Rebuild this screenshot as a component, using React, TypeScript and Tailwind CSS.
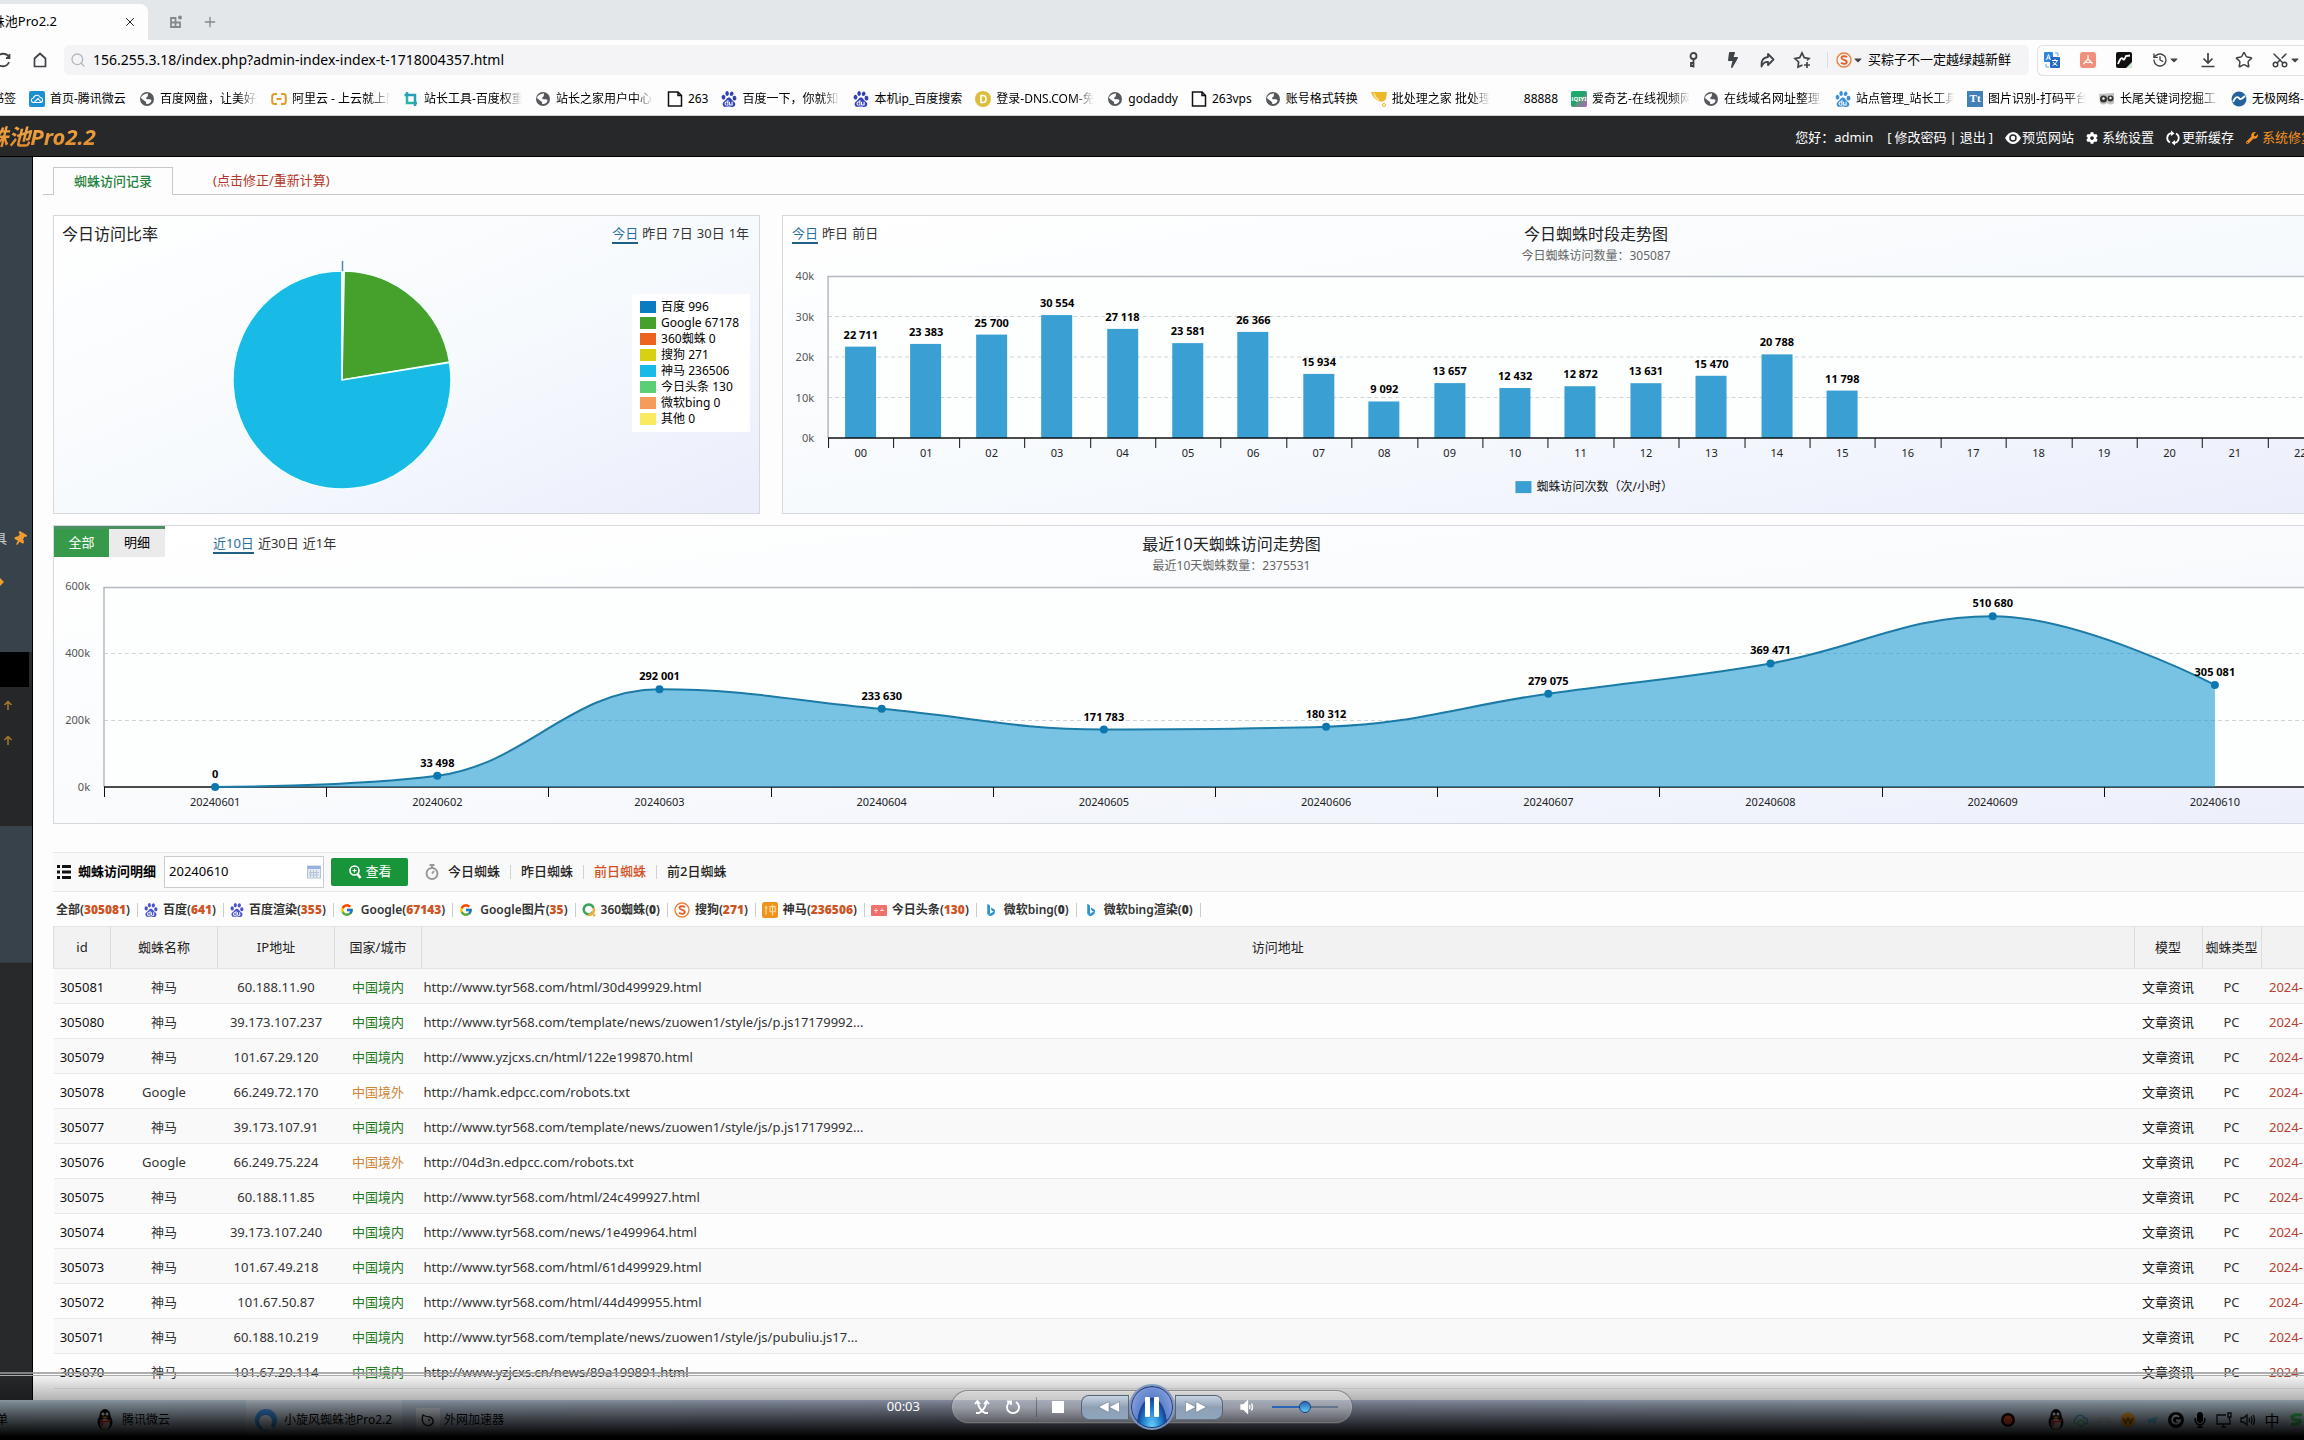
import type { ReactNode } from "react";
import { History, Plus, Scissors, Search, Star, X } from "lucide-react";
import { FaBolt, FaCaretDown, FaCog, FaMicrophone, FaThumbtack, FaWrench } from "react-icons/fa";
import { SiBaidu } from "react-icons/si";
import { FcGoogle } from "react-icons/fc";
import { BsBing } from "react-icons/bs";

/* ---------- data ---------- */

const hourly = [
  22711, 23383, 25700, 30554, 27118, 23581, 26366, 15934, 9092, 13657, 12432, 12872, 13631, 15470, 20788, 11798,
];

const daily = [
  { day: "20240601", value: 0 },
  { day: "20240602", value: 33498 },
  { day: "20240603", value: 292001 },
  { day: "20240604", value: 233630 },
  { day: "20240605", value: 171783 },
  { day: "20240606", value: 180312 },
  { day: "20240607", value: 279075 },
  { day: "20240608", value: 369471 },
  { day: "20240609", value: 510680 },
  { day: "20240610", value: 305081 },
];

const shares = [
  { name: "百度", value: 996, color: "#0a7cc0" },
  { name: "Google", value: 67178, color: "#45a02c" },
  { name: "360蜘蛛", value: 0, color: "#ec6420" },
  { name: "搜狗", value: 271, color: "#d8d012" },
  { name: "神马", value: 236506, color: "#17bbe6" },
  { name: "今日头条", value: 130, color: "#5bcf76" },
  { name: "微软bing", value: 0, color: "#f59c5a" },
  { name: "其他", value: 0, color: "#faea60" },
];

const visits = [
  ["305081", "神马", "60.188.11.90", "中国境内", "http://www.tyr568.com/html/30d499929.html"],
  ["305080", "神马", "39.173.107.237", "中国境内", "http://www.tyr568.com/template/news/zuowen1/style/js/p.js17179992..."],
  ["305079", "神马", "101.67.29.120", "中国境内", "http://www.yzjcxs.cn/html/122e199870.html"],
  ["305078", "Google", "66.249.72.170", "中国境外", "http://hamk.edpcc.com/robots.txt"],
  ["305077", "神马", "39.173.107.91", "中国境内", "http://www.tyr568.com/template/news/zuowen1/style/js/p.js17179992..."],
  ["305076", "Google", "66.249.75.224", "中国境外", "http://04d3n.edpcc.com/robots.txt"],
  ["305075", "神马", "60.188.11.85", "中国境内", "http://www.tyr568.com/html/24c499927.html"],
  ["305074", "神马", "39.173.107.240", "中国境内", "http://www.tyr568.com/news/1e499964.html"],
  ["305073", "神马", "101.67.49.218", "中国境内", "http://www.tyr568.com/html/61d499929.html"],
  ["305072", "神马", "101.67.50.87", "中国境内", "http://www.tyr568.com/html/44d499955.html"],
  ["305071", "神马", "60.188.10.219", "中国境内", "http://www.tyr568.com/template/news/zuowen1/style/js/pubuliu.js17..."],
  ["305070", "神马", "101.67.29.114", "中国境内", "http://www.yzjcxs.cn/news/89a199891.html"],
];

const spaced = (n: number) => String(n).replace(/\B(?=(\d{3})+$)/g, " ");

/* ---------- small icons ---------- */

function Globe() {
  return (
    <svg viewBox="0 0 16 16" className="size-4">
      <circle cx="8" cy="8" r="7" fill="#55585c" />
      <path d="M2 6.500C4 2.500 7 3 9 2.200C8.500 4 9.500 5 8 6C6.500 7 7 8 8.500 8.300C10.500 8.500 12 8 12.500 9.500C12 12 9.500 13.500 7 12.800C8 11 5.500 10 4.500 9C3.500 8.300 2.500 8 2 6.500Z" fill="#fff" />
    </svg>
  );
}

function Page() {
  return (
    <svg viewBox="0 0 16 16" className="size-4" fill="none" stroke="#111" strokeWidth="1.500">
      <path d="M1.500 1H11L14.500 4.500V15H1.500Z" />
      <path d="M11 1V4.500H14.500" />
    </svg>
  );
}

function Sogou() {
  return (
    <svg viewBox="0 0 16 16" className="size-4" fill="none">
      <circle cx="8" cy="8" r="7" stroke="#e8813c" strokeWidth="1.400" />
      <path d="M11 5.200C9.500 3.800 5.500 3.800 5.500 6C5.500 8.200 10.800 7.600 10.800 10C10.800 12.200 6.500 12.300 5 10.700" stroke="#e2622a" strokeWidth="1.800" />
    </svg>
  );
}

const badges: Record<string, ReactNode> = {
  globe: <Globe />,
  page: <Page />,
  baidu: <SiBaidu className="size-4 text-[#3343b5]" />,
  baiduBlue: <SiBaidu className="size-4 text-[#3d8fd6]" />,
  weiyun: (
    <svg viewBox="0 0 16 16" className="size-4">
      <rect width="16" height="16" rx="2" fill="#1b8fd0" />
      <path d="M4 11.500A2.300 2.300 0 0 1 4.500 7A3.600 3.600 0 0 1 11.300 6.500A2.600 2.600 0 0 1 12 11.500ZM5.500 11L9 7.500L12 11" fill="none" stroke="#fff" strokeWidth="1.100" />
    </svg>
  ),
  aliyun: (
    <svg viewBox="0 0 16 16" className="size-4" fill="none" stroke="#e09a2c" strokeWidth="2">
      <path d="M6 3H3.500Q1.200 3 1.200 5.500V10.500Q1.200 13 3.500 13H6M10 3H12.500Q14.800 3 14.800 5.500V10.500Q14.800 13 12.500 13H10M5.500 8H10.500" />
    </svg>
  ),
  chinaz: (
    <svg viewBox="0 0 16 16" className="size-4" fill="none" strokeWidth="2.500">
      <path d="M4 1V12H14" stroke="#2bb3a3" />
      <path d="M1.500 4H12V15" stroke="#2a9fb8" />
    </svg>
  ),
  dns: (
    <svg viewBox="0 0 16 16" className="size-4">
      <circle cx="8" cy="8" r="8" fill="#dcbd3c" />
      <path d="M6 4.500H8.200Q11 4.500 11 8Q11 11.500 8.200 11.500H6Z" fill="none" stroke="#fff" strokeWidth="1.600" />
    </svg>
  ),
  cup: (
    <svg viewBox="0 0 16 16" className="size-4">
      <path d="M0 1H16L15 8Q12 12 8 10Q2 8 0 1Z" fill="#edb72a" />
      <path d="M3 2Q4 7 8 9" stroke="#fbe29a" strokeWidth="1.500" fill="none" />
      <circle cx="13" cy="14" r="1.500" fill="none" stroke="#edb72a" />
    </svg>
  ),
  blank: null,
  iqiyi: (
    <span className="flex size-4 items-center justify-center rounded-[2px] bg-linear-to-br from-[#12b36a] via-[#22a06b] to-[#b04fc0] text-[6px] font-bold text-white">
      iQIYI
    </span>
  ),
  tt: (
    <span className="flex size-4 items-center justify-center bg-[#4380b8] font-['Liberation_Serif',serif] text-[11px] font-bold text-white">
      Tt
    </span>
  ),
  owl: (
    <svg viewBox="0 0 16 16" className="size-4">
      <path d="M0 3L15 2V12Q12 15 8 12Q4 15 1 12Z" fill="#bfc2bd" />
      <circle cx="4.500" cy="8" r="3.500" fill="#333" />
      <circle cx="11.500" cy="7.500" r="3" fill="#333" />
      <circle cx="4.500" cy="7.500" r="1.200" fill="#fff" />
      <circle cx="11.500" cy="7" r="1.200" fill="#fff" />
    </svg>
  ),
  wave: (
    <svg viewBox="0 0 16 16" className="size-4">
      <circle cx="8" cy="8" r="7.500" fill="#23639f" />
      <path d="M2 11Q5 4 8 7Q9 10 14 5" fill="none" stroke="#fff" strokeWidth="1.800" />
    </svg>
  ),
};

function Caret() {
  return <FaCaretDown className="size-3 text-[#444]" />;
}

/* ---------- browser chrome ---------- */

const bookmarks: [string, string, boolean?][] = [
  ["weiyun", "首页-腾讯微云"],
  ["globe", "百度网盘，让美好生活", true],
  ["aliyun", "阿里云 - 上云就上阿里", true],
  ["chinaz", "站长工具-百度权重查", true],
  ["globe", "站长之家用户中心 登", true],
  ["page", "263"],
  ["baidu", "百度一下，你就知道", true],
  ["baidu", "本机ip_百度搜索"],
  ["dns", "登录-DNS.COM-免费", true],
  ["globe", "godaddy"],
  ["page", "263vps"],
  ["globe", "账号格式转换"],
  ["cup", "批处理之家 批处理论坛", true],
  ["blank", "88888"],
  ["iqiyi", "爱奇艺-在线视频网站", true],
  ["globe", "在线域名网址整理工", true],
  ["baiduBlue", "站点管理_站长工具_", true],
  ["tt", "图片识别-打码平台-", true],
  ["owl", "长尾关键词挖掘工具", true],
  ["wave", "无极网络-"],
];

function BrowserChrome() {
  return (
    <div className="shrink-0 bg-[#fdfdfd] text-black">
      <div className="flex h-10 items-end bg-[#e3e7ea]">
        <div className="flex h-9 w-[148px] items-center rounded-tr-lg bg-[#fdfdfd]">
          <div className="flex w-[57px] justify-end overflow-hidden text-[13px] whitespace-nowrap">小旋风蜘蛛池Pro2.2</div>
          <button aria-label="关闭标签页" className="ml-[66px]">
            <X className="size-[14px]" strokeWidth={1.5} />
          </button>
        </div>
        <div className="flex h-9 items-center gap-[18px] pl-5 text-[#85898c]">
          <button aria-label="标签页管理">
            <svg viewBox="0 0 16 16" className="size-4" fill="none" stroke="currentColor" strokeWidth="1.800">
              <path d="M3 4H7.500V13H3ZM3 8.500H12V13H3M7.500 8.500V13" />
              <circle cx="12" cy="3.500" r="2" fill="currentColor" stroke="none" />
            </svg>
          </button>
          <button aria-label="新建标签页">
            <Plus className="size-4" />
          </button>
        </div>
      </div>
      <div className="flex h-10 items-center overflow-hidden text-[#3f4347]">
        <button aria-label="刷新" className="flex w-3 shrink-0 justify-end overflow-hidden">
          <svg viewBox="0 0 18 18" className="size-[18px] shrink-0" fill="none" stroke="currentColor" strokeWidth="1.800">
            <path d="M3 7A6.500 6.500 0 0 1 15 6.500M15 11A6.500 6.500 0 0 1 3 11.500M15.500 3V7H12M2.500 15V11H6" />
          </svg>
        </button>
        <button aria-label="主页" className="ml-5 shrink-0">
          <svg viewBox="0 0 16 16" className="size-4" fill="none" stroke="currentColor" strokeWidth="1.700">
            <path d="M2.500 14.500V6.500L8 1.500L13.500 6.500V14.500Z" />
          </svg>
        </button>
        <div className="ml-4 flex h-[30px] min-w-0 flex-1 items-center rounded-md bg-[#f4f4f6]">
          <Search className="ml-1.5 size-4 text-[#b5b8bb]" />
          <input
            aria-label="地址栏"
            readOnly
            className="ml-[7px] min-w-0 flex-1 bg-transparent text-sm text-black outline-none"
            defaultValue="156.255.3.18/index.php?admin-index-index-t-1718004357.html"
          />
          <div className="flex shrink-0 items-center pr-[18px]">
            <button aria-label="密码">
              <svg viewBox="0 0 16 16" className="size-4" fill="none" stroke="currentColor" strokeWidth="1.800">
                <circle cx="8.500" cy="4" r="3" />
                <path d="M8.500 7V15.500M8.500 11H6V14H8.500" />
              </svg>
            </button>
            <button aria-label="极速" className="ml-6">
              <FaBolt className="size-4" />
            </button>
            <button aria-label="分享" className="ml-[18px]">
              <svg viewBox="0 0 16 16" className="size-4" fill="none" stroke="currentColor" strokeWidth="1.800" strokeLinejoin="round">
                <path d="M9 2L14.500 7.500L9 13V10Q5 9.500 2.500 14.500Q1.500 6 9 5Z" />
              </svg>
            </button>
            <button aria-label="收藏" className="ml-[18px]">
              <svg viewBox="0 0 18 18" className="size-[18px]" fill="none" stroke="currentColor" strokeWidth="1.700">
                <path d="M9.500 14L5 16L5.600 11L2 7.500L6.700 6.700L9 2L11.300 6.700L16 7.500L14 9.500M14 11V17M11 14H17" />
              </svg>
            </button>
            <span className="mr-2 ml-4 h-4 w-px bg-[#dcdcdc]" />
            <Sogou />
            <Caret />
            <span className="ml-1 text-[13px] text-black">买粽子不一定越绿越新鲜</span>
          </div>
        </div>
        <div className="ml-2 flex h-[31px] w-[267px] shrink-0 items-center rounded-l-md border border-r-0 border-[#e4dfe0] pl-1.5">
          <svg viewBox="0 0 16 16" className="size-4">
            <rect x="0" y="0" width="9" height="10" rx="1" fill="#2f86e0" />
            <rect x="6" y="5" width="10" height="11" rx="1" fill="#2467c4" />
            <path d="M2.500 8L4.500 2.500L6.500 8M3 6H6" stroke="#fff" fill="none" />
            <path d="M8 8.500H14M11 7V8.500M13 9Q11.500 12.500 8.500 13.500M9 10Q10.500 12.500 13.500 13.500" stroke="#fff" fill="none" />
            <path d="M11 1H14V4M2 12V15H5" stroke="#5bb0ea" fill="none" />
          </svg>
          <svg viewBox="0 0 16 16" className="ml-5 size-4">
            <rect width="16" height="16" rx="3" fill="#ef8f7c" />
            <path d="M8 3V7L12.500 11.500M8 7L3.500 12M5 10.500H11" stroke="#fff" strokeWidth="1.200" fill="none" />
          </svg>
          <svg viewBox="0 0 16 16" className="ml-5 size-4">
            <rect width="16" height="16" rx="2" fill="#111" />
            <path d="M2 12Q5 4 7 7Q8 9 10 4L14 3.500" stroke="#fff" strokeWidth="1.800" fill="none" />
            <path d="M16 10L10 16H16Z" fill="#cfe9d6" />
          </svg>
          <History className="ml-5 size-4" />
          <Caret />
          <svg viewBox="0 0 16 16" className="ml-5 size-4" fill="none" stroke="currentColor" strokeWidth="1.700">
            <path d="M8 1V11M3.500 6.500L8 11L12.500 6.500M1.500 14.500H14.500" />
          </svg>
          <Star className="ml-[19px] size-[18px]" />
          <Scissors className="ml-[18px] size-[18px] -rotate-90" />
          <Caret />
        </div>
      </div>
      <nav className="flex h-9 items-center gap-[13px] overflow-hidden border-b border-[#cfcfcf] pt-0.5 text-xs whitespace-nowrap">
        <span className="flex w-4 shrink-0 justify-end overflow-hidden">书签</span>
        {bookmarks.map(([icon, label, faded], i) => (
          <a key={i} href="#" className="flex shrink-0 items-center gap-[5px]">
            <span className="size-4">{badges[icon]}</span>
            {faded ? (
              <span className="w-[98px] overflow-hidden [mask-image:linear-gradient(to_right,black_80%,transparent)]">
                {label}
              </span>
            ) : (
              <span>{label}</span>
            )}
          </a>
        ))}
      </nav>
    </div>
  );
}

/* ---------- admin header and sidebar ---------- */

function AdminHeader() {
  return (
    <header className="h-[41px] shrink-0 border-b border-black bg-[#27282a] text-[13px] text-white">
      <div className="flex h-full w-[calc(100%+106px)] items-center justify-between pr-24 whitespace-nowrap">
        <div className="flex w-[98px] justify-end overflow-hidden bg-linear-to-b from-[#f5b050] to-[#dc8420] bg-clip-text pr-0.5 text-[22px] font-bold text-transparent italic">
          小旋风蜘蛛池Pro2.2
        </div>
        <div className="flex items-center pt-1">
          <span>您好：admin</span>
          <span className="ml-3.5 flex gap-[3px]">
            <span>[</span>
            <a href="#">修改密码</a>
            <span>|</span>
            <a href="#">退出</a>
            <span>]</span>
          </span>
          <a href="#" className="ml-3 flex items-center gap-px">
            <svg viewBox="0 0 16 16" className="size-4">
              <path d="M0 8Q3.500 2 8 2T16 8Q12.500 14 8 14T0 8Z" fill="#fff" />
              <circle cx="8" cy="8" r="3" fill="none" stroke="#27282a" strokeWidth="1.500" />
            </svg>
            预览网站
          </a>
          <a href="#" className="ml-3 flex items-center gap-1">
            <FaCog className="size-3" />
            系统设置
          </a>
          <a href="#" className="ml-3 flex items-center gap-0.5">
            <svg viewBox="0 0 14 16" className="h-4 w-3.5" fill="none" stroke="#fff" strokeWidth="1.800">
              <path d="M4 12.500A5 5 0 0 1 5 3.200M10 3.500A5 5 0 0 1 9 12.800" />
              <path d="M5 0.500L8.500 3.500L5 6ZM9 10L5.500 12.800L9 15.500Z" fill="#fff" stroke="none" />
            </svg>
            更新缓存
          </a>
          <a href="#" className="ml-3 flex items-center gap-1 text-[#f59320]">
            <FaWrench className="size-3" />
            系统修复
          </a>
        </div>
      </div>
    </header>
  );
}

function Sidebar() {
  return (
    <aside className="flex w-[33px] shrink-0 flex-col overflow-hidden border-r border-black bg-[#28292b] text-[13px]">
      <div className="flex h-[495px] shrink-0 flex-col bg-[#37424b] pt-[368px] text-[#c9ced2]">
        <div className="flex h-7 items-center gap-1.5">
          <span className="flex w-[7px] justify-end overflow-hidden whitespace-nowrap">工具</span>
          <FaThumbtack className="size-3.5 rotate-[30deg] text-[#f09c30]" />
        </div>
        <svg viewBox="0 0 4 10" className="mt-6 h-2.5 w-1">
          <path d="M0 1L4 5L0 9Z" fill="#f09c30" />
        </svg>
      </div>
      <div className="h-[35px] w-[29px] shrink-0 bg-black" />
      <div className="flex h-[140px] shrink-0 flex-col border-b border-[#3c4146] bg-[#262728] text-[#a9772e]">
        <span className="flex h-[35px] items-center pl-[3px]">
          <UpArrow />
        </span>
        <span className="flex h-[35px] items-center pl-[3px]">
          <UpArrow />
        </span>
      </div>
      <div className="h-[136px] shrink-0 border-b border-[#303940] bg-[#37424b]" />
    </aside>
  );
}

function UpArrow() {
  return (
    <svg viewBox="0 0 10 10" className="size-2.5" fill="none" stroke="currentColor" strokeWidth="1.500">
      <path d="M5 10V1.500M1.500 5L5 1.500L8.500 5" />
    </svg>
  );
}

/* ---------- charts ---------- */

function PeriodLinks({ items }: { items: string[] }) {
  return (
    <div className="flex gap-1 text-[13px] leading-[18px] text-[#333]">
      {items.map((item, i) =>
        i === 0 ? (
          <a key={item} href="#" className="border-b-2 border-[#1f5f86] text-[#2c6f9c]">
            {item}
          </a>
        ) : (
          <a key={item} href="#">
            {item}
          </a>
        )
      )}
    </div>
  );
}

function wedge(cx: number, cy: number, r: number, from: number, to: number) {
  const at = (t: number) => {
    const a = t * 2 * Math.PI;
    return `${(cx + r * Math.sin(a)).toFixed(2)} ${(cy - r * Math.cos(a)).toFixed(2)}`;
  };
  return `M${cx} ${cy}L${at(from)}A${r} ${r} 0 ${to - from > 0.5 ? 1 : 0} 1 ${at(to)}Z`;
}

function SharePie() {
  const total = shares.reduce((sum, s) => sum + s.value, 0);
  let start = 0;
  const slices = shares.map((s) => {
    const from = start;
    start += s.value / total;
    return { ...s, from, to: start };
  });
  return (
    <svg viewBox="0 0 240 250" className="h-[250px] w-[240px]">
      {slices
        .filter((s) => s.value > 60000)
        .map((s) => (
          <path key={s.name} d={wedge(119, 129, 109, s.from, s.to)} fill={s.color} stroke="#f0ffff" strokeWidth="1.500" />
        ))}
      <path d="M119.500 10V20" stroke="#4a8bb5" strokeWidth="1.500" />
    </svg>
  );
}

function ShareCard() {
  return (
    <section className="flex h-[299px] w-[30%] flex-col border border-[#d5d8dd] bg-linear-to-br from-white via-[#f7fafd] to-[#ebeefb]">
      <div className="flex h-[35px] items-center justify-between pr-2.5 pl-2">
        <h2 className="text-base text-[#222]">今日访问比率</h2>
        <PeriodLinks items={["今日", "昨日", "7日", "30日", "1年"]} />
      </div>
      <div className="flex items-start">
        <div className="flex flex-1 justify-center">
          <SharePie />
        </div>
        <ul className="mt-[43px] mr-[9px] w-[118px] bg-white py-[5px] pl-2 text-xs leading-4 text-black">
          {shares.map((s) => (
            <li key={s.name} className="flex items-center gap-[5px] whitespace-nowrap">
              <span className="h-3 w-4" style={{ backgroundColor: s.color }} />
              {s.name} {s.value}
            </li>
          ))}
        </ul>
      </div>
    </section>
  );
}

function ChartHeading({ title, note }: { title: string; note: string }) {
  return (
    <div className="text-center whitespace-nowrap">
      <h2 className="text-base leading-6 text-[#222]">{title}</h2>
      <p className="text-xs leading-5 text-[#666]">{note}</p>
    </div>
  );
}

function HourlyCard() {
  const step = 65.4;
  const base = 173;
  const left = 45;
  const y = (v: number) => base - (v / 40000) * 161;
  return (
    <section className="h-[299px] min-w-0 flex-1 border border-[#d5d8dd] bg-linear-to-br from-white via-[#f7fafd] to-[#ebeefb]">
      <div className="grid h-[49px] grid-cols-[1fr_auto_1fr]">
        <div className="pt-2 pl-[9px]">
          <PeriodLinks items={["今日", "昨日", "前日"]} />
        </div>
        <div className="pt-1.5">
          <ChartHeading title="今日蜘蛛时段走势图" note="今日蜘蛛访问数量：305087" />
        </div>
      </div>
      <svg viewBox="0 0 1625 247" className="block h-auto w-full">
        <rect x={left} y="11" width={step * 24} height="162" fill="#fdfefe" />
        {[1, 2, 3].map((n) => (
          <path key={n} d={`M${left} ${base - n * 40.5}H${left + step * 24}`} stroke="#d0d3d6" strokeDasharray="4 3" />
        ))}
        <path d={`M${left + step * 24} 11.500H${left}V173`} fill="none" stroke="#b5bac0" strokeWidth="1.500" />
        {[0, 1, 2, 3, 4].map((n) => (
          <text key={n} x="31" y={base - n * 40.5 + 4} textAnchor="end" fontSize="11" fill="#555">
            {n * 10}k
          </text>
        ))}
        {hourly.map((v, i) => (
          <g key={i}>
            <rect x={Math.round(left + step * i + 17)} y={y(v)} width="31" height={base - y(v)} fill="#3aa0d4" />
            <text x={left + step * (i + 0.5)} y={y(v) - 8} textAnchor="middle" fontSize="11" fontWeight="700" fill="#000">
              {spaced(v)}
            </text>
          </g>
        ))}
        <path d={`M${left} 173H${left + step * 24}`} stroke="#111" strokeWidth="1.500" />
        {Array.from({ length: 24 }, (_, i) => (
          <g key={i}>
            <path d={`M${Math.round(left + step * i) + 0.5} 173V183`} stroke="#111" />
            <text x={left + step * (i + 0.5)} y="192" textAnchor="middle" fontSize="11" fill="#222">
              {String(i).padStart(2, "0")}
            </text>
          </g>
        ))}
        <rect x="732" y="216" width="16" height="12" fill="#3aa0d4" />
        <text x="753" y="226" fontSize="12" fill="#111">
          蜘蛛访问次数（次/小时）
        </text>
      </svg>
    </section>
  );
}

// Control points keep each peak flat so the curve never overshoots a value.
function smoothPath(pts: [number, number][]) {
  let d = `M${pts[0][0]} ${pts[0][1]}`;
  let right = pts[0];
  for (let i = 1; i < pts.length; i++) {
    const [x, y] = pts[i];
    const prev = pts[i - 1];
    const next = pts[i + 1];
    let lx = x;
    let ly = y;
    let nextRight: [number, number] = [x, y];
    if (next) {
      lx = (1.5 * x + prev[0]) / 2.5;
      ly = (1.5 * y + prev[1]) / 2.5;
      const rx = (1.5 * x + next[0]) / 2.5;
      let ry = (1.5 * y + next[1]) / 2.5;
      const fix = ((ry - ly) * (rx - x)) / (rx - lx) + y - ry;
      ly += fix;
      ry += fix;
      if (ly > prev[1] && ly > y) {
        ly = Math.max(prev[1], y);
        ry = 2 * y - ly;
      } else if (ly < prev[1] && ly < y) {
        ly = Math.min(prev[1], y);
        ry = 2 * y - ly;
      }
      if (ry > next[1] && ry > y) {
        ry = Math.max(next[1], y);
        ly = 2 * y - ry;
      } else if (ry < next[1] && ry < y) {
        ry = Math.min(next[1], y);
        ly = 2 * y - ry;
      }
      nextRight = [rx, ry];
    }
    d += `C${right[0]} ${right[1]} ${lx} ${ly} ${x} ${y}`;
    right = nextRight;
  }
  return d;
}

function DailyCard() {
  const left = 50;
  const step = 222.2;
  const base = 211;
  const pts = daily.map((d, i): [number, number] => [left + step * (i + 0.5), base - (d.value / 200000) * 66.9]);
  const line = smoothPath(pts);
  return (
    <section className="mt-[11px] h-[299px] border border-[#d5d8dd] bg-linear-to-br from-white via-[#f9fbfd] to-[#eceffb]">
      <div className="grid h-[50px] grid-cols-[1fr_auto_1fr]">
        <div className="flex items-start">
          <div className="flex border-t-3 border-[#4c8f62] text-[13px]">
            <button className="h-7 w-[55px] bg-[#37994a] text-white">全部</button>
            <button className="h-7 w-14 bg-[#ebebeb] text-black">明细</button>
          </div>
          <div className="pt-2 pl-12">
            <PeriodLinks items={["近10日", "近30日", "近1年"]} />
          </div>
        </div>
        <div className="pt-1.5">
          <ChartHeading title="最近10天蜘蛛访问走势图" note="最近10天蜘蛛数量：2375531" />
        </div>
      </div>
      <svg viewBox="0 0 2355 247" className="block h-auto w-full">
        <rect x={left} y="11" width={step * 10} height="200" fill="#fdfefe" />
        {[1, 2].map((n) => (
          <path key={n} d={`M${left} ${Math.round(base - n * 66.9)}.5H${left + step * 10}`} stroke="#d0d3d6" strokeDasharray="4 3" />
        ))}
        <path d={`M${left + step * 10} 11.500H${left}V211`} fill="none" stroke="#b5bac0" strokeWidth="1.500" />
        {[0, 200, 400, 600].map((n) => (
          <text key={n} x="36" y={base - (n / 200) * 66.9 + 4} textAnchor="end" fontSize="11" fill="#555">
            {n}k
          </text>
        ))}
        <path d={`M${left} 211H${left + step * 10}`} stroke="#111" strokeWidth="1.500" />
        <path d={`${line}V${base}H${pts[0][0]}Z`} fill="#1f99d0" fillOpacity="0.6" />
        <path d={line} fill="none" stroke="#1b7ba6" strokeWidth="2" />
        {daily.map((d, i) => (
          <g key={d.day}>
            <path d={`M${Math.round(left + step * i) + 0.5} 211V221`} stroke="#111" />
            <circle cx={pts[i][0]} cy={pts[i][1]} r="4" fill="#0d78b0" />
            <text x={pts[i][0]} y={pts[i][1] - 9} textAnchor="middle" fontSize="11" fontWeight="700" fill="#000">
              {spaced(d.value)}
            </text>
            <text x={pts[i][0]} y="230" textAnchor="middle" fontSize="11" fill="#222">
              {d.day}
            </text>
          </g>
        ))}
      </svg>
    </section>
  );
}

/* ---------- visit list ---------- */

function Bing() {
  return <BsBing className="mx-0.5 size-3 text-[#2a93d0]" />;
}

const engines: { name: string; count: number; icon?: ReactNode }[] = [
  { name: "全部", count: 305081 },
  { name: "百度", count: 641, icon: <SiBaidu className="size-3.5 text-[#4a55c8]" /> },
  { name: "百度渲染", count: 355, icon: <SiBaidu className="size-3.5 text-[#4a55c8]" /> },
  { name: "Google", count: 67143, icon: <FcGoogle className="mr-0.5 size-3.5" /> },
  { name: "Google图片", count: 35, icon: <FcGoogle className="mr-0.5 size-3.5" /> },
  {
    name: "360蜘蛛",
    count: 0,
    icon: (
      <svg viewBox="0 0 14 14" className="size-3.5" fill="none" strokeWidth="2.500">
        <path d="M11 9A5 5 0 1 1 11.500 5" stroke="#3aa55a" />
        <path d="M11.500 5A5 5 0 0 1 6 11.800M11.500 11.500L13 13" stroke="#edb03a" />
      </svg>
    ),
  },
  { name: "搜狗", count: 271, icon: <Sogou /> },
  {
    name: "神马",
    count: 236506,
    icon: (
      <svg viewBox="0 0 14 14" className="size-4">
        <rect width="14" height="14" rx="2" fill="#f0931c" />
        <path d="M3.500 3V11M2.500 5H5M7 4H11.500V8.500H7ZM9.200 2.500V11.500" stroke="#fbdca4" fill="none" />
      </svg>
    ),
  },
  {
    name: "今日头条",
    count: 130,
    icon: (
      <svg viewBox="0 0 16 11" className="h-[11px] w-4">
        <rect width="16" height="11" rx="1" fill="#f0706c" />
        <path d="M3 5.500H7M5 3V8M9 5.500H13M11 3V6" stroke="#fcd5d3" />
      </svg>
    ),
  },
  { name: "微软bing", count: 0, icon: <Bing /> },
  { name: "微软bing渲染", count: 0, icon: <Bing /> },
];

function VisitToolbar() {
  return (
    <form className="mt-[28px] flex h-10 items-center border-y border-[#e8e8e8] bg-[#f9f9f9] text-[13px] text-[#222]">
      <svg viewBox="0 0 14 14" className="ml-1 size-3.5" fill="#111">
        <path d="M0 0H3V3H0ZM5 0H14V3H5ZM0 5.500H3V8.500H0ZM5 5.500H14V8.500H5ZM0 11H3V14H0ZM5 11H14V14H5Z" />
      </svg>
      <label htmlFor="visit-day" className="ml-[7px] font-semibold text-black">
        蜘蛛访问明细
      </label>
      <div className="ml-2 flex h-8 w-[160px] items-center border border-[#ccc] bg-white pr-0.5">
        <input id="visit-day" defaultValue="20240610" className="min-w-0 flex-1 bg-transparent pl-1 text-black outline-none" />
        <svg viewBox="0 0 14 14" className="size-3.5">
          <rect x="0.500" y="1" width="13" height="12" fill="#e3ebf6" stroke="#b5c3d8" />
          <rect x="0.500" y="1" width="13" height="3" fill="#94b4e0" />
          <path d="M3.500 5V12M6.500 5V12M9.500 5V12M2 7.500H12M2 10H12" stroke="#b6c3d8" />
        </svg>
      </div>
      <button
        type="button"
        className="ml-[7px] flex h-7 w-[77px] items-center justify-center gap-1 rounded-[2px] bg-[#18943a] text-white"
      >
        <svg viewBox="0 0 14 14" className="size-3.5" fill="none" stroke="#fff" strokeWidth="1.600">
          <circle cx="6.500" cy="5.500" r="4.500" />
          <path d="M6.500 3.500V7.500M4.500 5.500H8.500" strokeWidth="1.200" />
          <path d="M9.500 9L12.500 13" strokeWidth="2.500" />
        </svg>
        查看
      </button>
      <svg viewBox="0 0 14 16" className="ml-[17px] h-4 w-3.5" fill="none" stroke="#999" strokeWidth="2">
        <circle cx="7" cy="9.500" r="5.500" />
        <path d="M4.500 1H9.500M7 1V4M7 9.500L9 7" />
      </svg>
      <nav className="ml-[9px] flex items-center font-medium">
        <a href="#">今日蜘蛛</a>
        <Divider />
        <a href="#">昨日蜘蛛</a>
        <Divider />
        <a href="#" className="text-[#d4501f]">
          前日蜘蛛
        </a>
        <Divider />
        <a href="#">前2日蜘蛛</a>
      </nav>
    </form>
  );
}

function Divider() {
  return <span className="mr-2.5 ml-2.5 h-3.5 w-px bg-[#d0d0d0]" />;
}

function EngineFilter() {
  return (
    <nav className="flex h-[34px] items-center pt-0.5 pl-[3px] text-xs whitespace-nowrap text-[#333]">
      {engines.map((e) => (
        <a key={e.name} href="#" className="flex items-center">
          {e.icon && <span className="mr-[5px] ml-1.5 flex items-center">{e.icon}</span>}
          <span className="font-semibold">
            {e.name}(
            <b className={e.count > 0 ? "text-[#cf5424]" : ""}>{e.count}</b>)
          </span>
          <span className="ml-[7px] h-3.5 w-px bg-[#ccc]" />
        </a>
      ))}
    </nav>
  );
}

function VisitTable() {
  return (
    <table className="w-full table-fixed border-collapse text-[13px] text-[#333]">
      <colgroup>
        <col className="w-[57px]" />
        <col className="w-[107px]" />
        <col className="w-[117px]" />
        <col className="w-[87px]" />
        <col />
        <col className="w-[68px]" />
        <col className="w-[59px]" />
        <col className="w-[149px]" />
      </colgroup>
      <thead>
        <tr className="h-[42px] border-y border-[#e4e4e4] bg-[#f2f2f2] text-[#222]">
          {["id", "蜘蛛名称", "IP地址", "国家/城市", "访问地址", "模型", "蜘蛛类型"].map((h) => (
            <th key={h} className="border-x border-[#dcdcdc] p-0 pt-px font-normal whitespace-nowrap">
              {h}
            </th>
          ))}
          <th className="p-0" />
        </tr>
      </thead>
      <tbody>
        {visits.map(([id, spider, ip, region, url]) => (
          <tr key={id} className="h-[35px] border-b border-[#e9e9e9] text-center odd:bg-[#f9f9f9]">
            <td className="p-0 pt-[3px] text-[#111]">{id}</td>
            <td className="p-0 pt-[3px]">{spider}</td>
            <td className="p-0 pt-[3px]">{ip}</td>
            <td className={region === "中国境外" ? "p-0 pt-[3px] text-[#cf8636]" : "p-0 pt-[3px] text-[#1f7a1f]"}>
              {region}
            </td>
            <td className="p-0 pt-[3px] pl-0.5 text-left">{url}</td>
            <td className="p-0 pt-[3px] text-[#111]">文章资讯</td>
            <td className="p-0 pt-[3px]">PC</td>
            <td className="p-0 pt-[3px] pl-2 text-left text-[#b5402f]">2024-</td>
          </tr>
        ))}
      </tbody>
    </table>
  );
}

/* ---------- taskbar and player overlay ---------- */

function Penguin() {
  return (
    <svg viewBox="0 0 18 22" className="h-[22px] w-[18px]">
      <ellipse cx="9" cy="13" rx="7.500" ry="8" fill="#0c0c0c" />
      <ellipse cx="9" cy="6.500" rx="5.500" ry="6.500" fill="#0c0c0c" />
      <ellipse cx="9" cy="15" rx="4.800" ry="5.500" fill="#c4c4c4" />
      <circle cx="7" cy="5" r="1.500" fill="#ddd" />
      <circle cx="11" cy="5" r="1.500" fill="#ddd" />
      <path d="M5.500 8Q9 10 12.500 8Q9 6.800 5.500 8Z" fill="#f09a22" />
      <path d="M3 10Q9 13.500 15 10L14.500 12.500Q11 14 7.500 13.500L7 17H4.500L5 13Z" fill="#e03a2a" />
      <path d="M3 20.500Q6 18.500 8 21ZM10 21Q12 18.500 15 20.500Z" fill="#c07a1a" />
    </svg>
  );
}

const tray: ReactNode[] = [
  <svg viewBox="0 0 16 16" className="size-4">
    <circle cx="8" cy="8" r="7" fill="#1c0c0a" />
    <circle cx="8" cy="8" r="4.500" fill="#f04a32" />
  </svg>,
  <svg viewBox="0 0 16 16" className="size-4" fill="none" stroke="#c8ccd0">
    <path d="M12 5Q8 2 5 6T8 12M7 6H12V10Q12 12 9 12Q7 11 7 6" />
  </svg>,
  <Penguin />,
  <svg viewBox="0 0 16 16" className="size-4" fill="none" stroke="#4aa8c8" strokeWidth="1.500">
    <path d="M4 12A3 3 0 0 1 4 6.500A4.200 4.200 0 0 1 12 6A3 3 0 0 1 13 12" />
    <circle cx="9" cy="11" r="3" stroke="#5ccc70" />
  </svg>,
  <svg viewBox="0 0 16 16" className="size-4" fill="none" stroke="#b8bcc0" strokeWidth="1.200">
    <path d="M2 11Q2 6 5 6H11Q14 6 14 11Q12 11 11 9H5Q4 11 2 11Z" />
  </svg>,
  <svg viewBox="0 0 16 16" className="size-4">
    <circle cx="8" cy="8" r="7.500" fill="#f5a52c" />
    <path d="M3 6L5.500 11L8 6L10.500 11L13 6" fill="none" stroke="#80500c" strokeWidth="1.500" />
  </svg>,
  <svg viewBox="0 0 16 16" className="size-4">
    <path d="M3 8L14 4L11 12L7 9.500L6 12Z" fill="#5fc0d8" />
  </svg>,
  <svg viewBox="0 0 16 16" className="size-4">
    <circle cx="8" cy="8" r="8" fill="#0a0a0a" />
    <path d="M11 5A4 4 0 1 0 12 8.500H8" fill="none" stroke="#e4e8ea" strokeWidth="1.800" />
  </svg>,
  <FaMicrophone className="size-4" />,
  <svg viewBox="0 0 16 16" className="size-4" fill="none" stroke="#111" strokeWidth="1.300">
    <path d="M10 3H1V12H14V8M5 15H10M7.500 12V15M12 1H15V5H12ZM13.500 5V8" />
  </svg>,
  <svg viewBox="0 0 16 16" className="size-4" fill="none" stroke="#111" strokeWidth="1.300">
    <path d="M1 6H3.500L7 3V13L3.500 10H1ZM9 6Q10 8 9 10M11 4.500Q13 8 11 11.500M13 3Q16 8 13 13" />
  </svg>,
  <span className="text-[15px]">中</span>,
];

function Taskbar() {
  return (
    <footer className="flex h-10 shrink-0 items-center overflow-hidden bg-linear-to-r from-[#bfd2e0] via-[#b6bfdc] to-[#c0d4e2] text-xs whitespace-nowrap text-black">
      <span className="flex w-2 shrink-0 justify-end overflow-hidden">菜单</span>
      <button className="ml-[88px] flex items-center gap-2">
        <Penguin />
        腾讯微云
      </button>
      <button className="ml-[76px] flex h-full w-[156px] items-center gap-1.5 bg-white/25 pl-2">
        <svg viewBox="0 0 24 24" className="size-6">
          <circle cx="12" cy="12" r="11" fill="#3a9af0" />
          <path d="M7 18A6.500 6.500 0 1 1 17 17L20 22H9Z" fill="#e0ecf4" />
        </svg>
        小旋风蜘蛛池Pro2.2
      </button>
      <button className="ml-3.5 flex items-center gap-1">
        <svg viewBox="0 0 24 24" className="size-6">
          <rect width="24" height="24" fill="#ffffff" opacity="0.5" />
          <path d="M7 7Q5 12 8 16Q13 20 17 15Q18 11 14 9Q10 9 7 7ZM13 11V13" fill="none" stroke="#222" strokeWidth="1.500" />
        </svg>
        外网加速器
      </button>
      <div className="ml-auto flex shrink-0 items-center">
        {tray.map((icon, i) => (
          <span key={i} className="flex w-6 justify-center">
            {icon}
          </span>
        ))}
        <span className="flex w-5 justify-end overflow-hidden">
          <svg viewBox="0 0 16 16" className="size-4 shrink-0">
            <path d="M14 3Q3 2 4 6Q5 8 12 8Q14 12 3 12.500" fill="none" stroke="#3cc458" strokeWidth="3" />
          </svg>
        </span>
      </div>
    </footer>
  );
}

function Player() {
  return (
    <div className="absolute inset-x-0 bottom-0 h-[68px] border-t-2 border-[#999]/80">
      <div className="absolute inset-0 mt-px border-t border-[#aaa] bg-[linear-gradient(to_bottom,rgba(0,0,0,0.04)_0%,rgba(0,0,0,0.3)_38%,rgba(0,0,0,0.4)_44%,rgba(0,0,0,0.72)_70%,black_95%)]" />
      <div className="relative mx-auto flex w-[402px] items-center pt-[11px]">
        <span className="absolute right-full mr-[31px] text-[13px] text-white">00:03</span>
        <div className="flex h-11 w-full items-center">
          <div className="flex h-[34px] w-full items-center rounded-full border border-black/35 bg-linear-to-b from-white/25 via-white/35 to-white/20 text-white shadow-[inset_0_0_0_1px_rgba(255,255,255,0.15)]">
            <button aria-label="无序播放" className="ml-[22px]">
              <svg viewBox="0 0 16 16" className="size-4" fill="none" stroke="#fff" strokeWidth="1.800">
                <path d="M2 14H5Q11 11 12.500 3M14 14H11Q5 11 3.500 3M1 5L3.500 2L6 5M10 5L12.500 2L15 5" />
              </svg>
            </button>
            <button aria-label="重复" className="ml-[15px]">
              <svg viewBox="0 0 16 16" className="size-4" fill="none" stroke="#fff" strokeWidth="1.800">
                <path d="M5 3A6 6 0 1 0 11 3M2 2.500H6V6" />
              </svg>
            </button>
            <span className="ml-[15px] h-5 w-px bg-black/30" />
            <button aria-label="停止" className="ml-[15px] size-3 bg-white" />
            <button
              aria-label="上一个"
              className="ml-[17px] flex h-[25px] w-12 items-center justify-center rounded-l-lg border border-[#3c4858]/70 bg-linear-to-b from-[#c8d4e2] via-[#8fa0b5] to-[#8ea6bd] pl-2"
            >
              <svg viewBox="0 0 22 12" className="h-3 w-[22px]" fill="#fff" stroke="#5d6b7a" strokeWidth="0.500">
                <path d="M11 0.500V11.500L0.500 6ZM21.500 0.500V11.500L11 6Z" />
              </svg>
            </button>
            <button
              aria-label="暂停"
              className="z-10 flex size-[46px] shrink-0 items-center justify-center rounded-full border-2 border-[#8596b8]/80 bg-[radial-gradient(ellipse_at_50%_100%,#6fd6fb_0%,#1f7fd0_32%,#173f92_50%,#5f82cc_52%,#9fb3e2_100%)] shadow-[inset_0_0_0_1px_#1c3573]"
            >
              <svg viewBox="0 0 14 20" className="h-5 w-3.5" fill="#fff">
                <rect x="0" width="5" height="20" rx="1" />
                <rect x="9" width="5" height="20" rx="1" />
              </svg>
            </button>
            <button
              aria-label="下一个"
              className="flex h-[25px] w-12 items-center justify-center rounded-r-lg border border-[#3c4858]/70 bg-linear-to-b from-[#c8d4e2] via-[#8fa0b5] to-[#8ea6bd] pr-1.5"
            >
              <svg viewBox="0 0 22 12" className="h-3 w-[22px]" fill="#fff" stroke="#5d6b7a" strokeWidth="0.500">
                <path d="M0.500 0.500V11.500L11 6ZM11 0.500V11.500L21.500 6Z" />
              </svg>
            </button>
            <button aria-label="静音" className="ml-[17px]">
              <svg viewBox="0 0 16 14" className="h-3.5 w-4" fill="none" stroke="#fff" strokeWidth="1.300">
                <path d="M1 5H3.500L7.500 1V13L3.500 9H1Z" fill="#fff" />
                <path d="M9.500 5Q10.500 7 9.500 9M11.500 3.500Q13.500 7 11.500 10.500" />
              </svg>
            </button>
            <input
              type="range"
              aria-label="音量"
              defaultValue={50}
              className="ml-4 h-3 w-[66px] appearance-none bg-[linear-gradient(to_right,#2b66b4_50%,#64748a_50%)] bg-size-[100%_2px] bg-center bg-no-repeat [&::-webkit-slider-thumb]:size-3 [&::-webkit-slider-thumb]:appearance-none [&::-webkit-slider-thumb]:rounded-full [&::-webkit-slider-thumb]:border [&::-webkit-slider-thumb]:border-[#16407c] [&::-webkit-slider-thumb]:bg-linear-to-b [&::-webkit-slider-thumb]:from-[#2c66b5] [&::-webkit-slider-thumb]:to-[#62c8f5]"
            />
          </div>
        </div>
      </div>
    </div>
  );
}

export default function App() {
  return (
    <div className="relative flex h-screen flex-col overflow-hidden bg-[#fdfdfd] font-['Noto_Sans','Noto_Sans_CJK_SC',sans-serif]">
      <BrowserChrome />
      <AdminHeader />
      <div className="flex min-h-0 flex-1 overflow-hidden">
        <Sidebar />
        <main className="min-w-0 flex-1 overflow-hidden pt-2.5">
          <div className="w-[calc(100%+106px)]">
            <div className="ml-[10px] flex h-7 items-end border-b border-[#c8c8c8] pl-2.5 text-[13px]">
              <a
                href="#"
                className="-mb-px flex h-7 w-[120px] items-center justify-center border border-b-0 border-[#c8c8c8] bg-[#fdfdfd] font-medium text-[#23813a]"
              >
                蜘蛛访问记录
              </a>
              <a href="#" className="ml-10 flex h-7 items-center pt-0.5 text-[#b5352a]">
                (点击修正/重新计算)
              </a>
            </div>
            <div className="pt-5 pl-5">
              <div className="flex gap-[22px]">
                <ShareCard />
                <HourlyCard />
              </div>
              <DailyCard />
              <VisitToolbar />
              <EngineFilter />
              <VisitTable />
            </div>
          </div>
        </main>
      </div>
      <Taskbar />
      <Player />
    </div>
  );
}
